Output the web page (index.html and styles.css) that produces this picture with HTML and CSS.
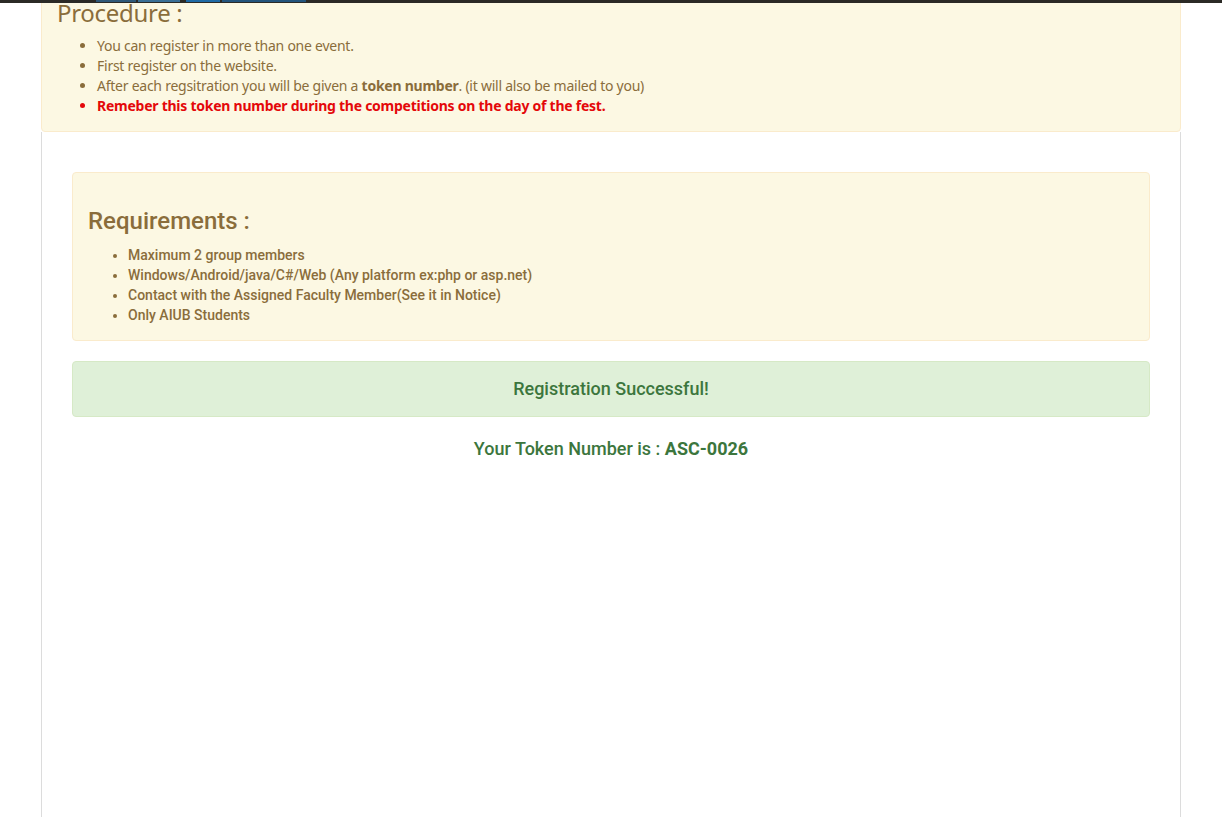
FILE: index.html
```html
<!DOCTYPE html>
<html>
<head>
<meta charset="utf-8">
<link rel="stylesheet" href="styles.css">
</head>
<body>
<div class="topbar">
  <span class="seg seg1"></span><span class="seg seg2"></span><span class="seg seg3"></span><span class="seg seg4"></span>
</div>
<div class="page">
  <div class="procedure alert-warning">
    <h3 class="proc-title">Procedure :</h3>
    <ul class="proc-list">
      <li>You can register in more than one event.</li>
      <li>First register on the website.</li>
      <li>After each regsitration you will be given a <b>token number</b>. (it will also be mailed to you)</li>
      <li class="red">Remeber this token number during the competitions on the day of the fest.</li>
    </ul>
  </div>
  <div class="content">
    <div class="req alert-warning">
      <h3 class="req-title">Requirements :</h3>
      <ul class="req-list">
        <li>Maximum 2 group members</li>
        <li>Windows/Android/java/C#/Web (Any platform ex:php or asp.net)</li>
        <li>Contact with the Assigned Faculty Member(See it in Notice)</li>
        <li>Only AIUB Students</li>
      </ul>
    </div>
    <div class="success">Registration Successful!</div>
    <p class="token">Your Token Number is : <b>ASC-0026</b></p>
  </div>
</div>
</body>
</html>
```
FILE: styles.css
```css
html, body {
  margin: 0;
  padding: 0;
  background: #fff;
  height: 100%;
}
body {
  font-family: "Noto Sans", "Open Sans", sans-serif;
  overflow: hidden;
}
.topbar {
  position: fixed;
  top: 0;
  left: 0;
  right: 0;
  height: 3px;
  background: #2b2a26;
  z-index: 10;
}
.seg {
  position: absolute;
  top: 0;
  height: 2px;
}
.seg1 { left: 96px; width: 40px; background: #2f5878; }
.seg2 { left: 138px; width: 42px; background: #3a6f96; }
.seg3 { left: 186px; width: 34px; background: #1f6aa5; }
.seg4 { left: 222px; width: 84px; background: #23547c; }

.page {
  width: 1140px;
  margin: -36px auto 0;
  display: flex;
  flex-direction: column;
  min-height: 900px;
}
.alert-warning {
  background: #fcf8e3;
  border: 1px solid #faebcc;
  border-radius: 4px;
  color: #8a6d3b;
}
.procedure {
  padding: 15px;
}
.proc-title {
  font-family: "Noto Sans", "Open Sans", sans-serif;
  font-weight: 400;
  font-size: 24px;
  line-height: 26.4px;
  margin: 20px 0 10px;
  letter-spacing: -0.3px;
}
.proc-list {
  margin: 0;
  padding-left: 40px;
  font-size: 14px;
  line-height: 20px;
  letter-spacing: -0.25px;
}
.proc-list b { font-weight: 700; }
.proc-list .red {
  color: #e4080a;
  font-weight: 700;
}
.content {
  flex: 1;
  border-left: 1px solid #dcdcdc;
  border-right: 1px solid #dcdcdc;
  padding: 40px 30px 0;
}
.req {
  padding: 15px;
  margin-bottom: 20px;
  font-family: Roboto, "Liberation Sans", sans-serif;
}
.req-title {
  font-family: Roboto, "Liberation Sans", sans-serif;
  font-weight: 500;
  font-size: 24px;
  line-height: 26.4px;
  margin: 20px 0 10px;
}
.req-list {
  margin: 0;
  padding-left: 40px;
  font-size: 14px;
  line-height: 20px;
  font-weight: 500;
}
.success {
  background: #dff0d8;
  border: 1px solid #d6e9c6;
  border-radius: 4px;
  color: #3c763d;
  padding: 15px;
  text-align: center;
  font-family: Roboto, "Liberation Sans", sans-serif;
  font-size: 18px;
  line-height: 24px;
  font-weight: 500;
  margin-bottom: 20px;
}
.token {
  margin: 0;
  text-align: center;
  color: #3c763d;
  font-family: Roboto, "Liberation Sans", sans-serif;
  font-size: 18px;
  line-height: 24px;
  font-weight: 500;
}
.token b { font-weight: 700; }
```
